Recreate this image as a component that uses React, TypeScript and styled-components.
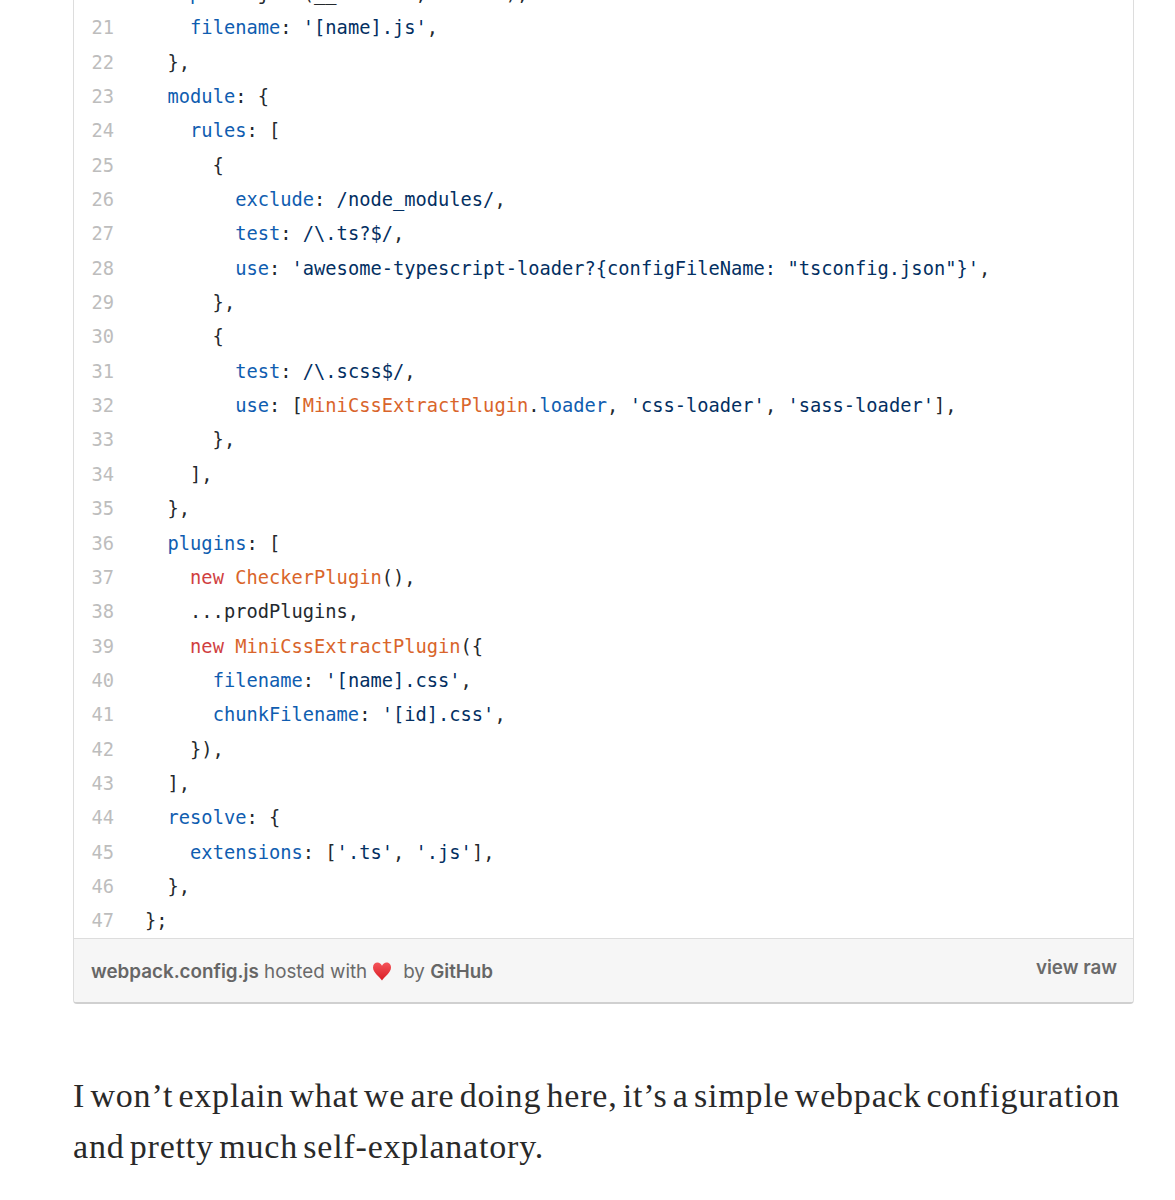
import styled, { createGlobalStyle } from 'styled-components';

const GlobalStyle = createGlobalStyle`
  html, body {
    margin: 0;
    padding: 0;
    background: #fff;
  }
  body {
    height: 1200px;
    overflow: hidden;
  }
`;

const Page = styled.div`
  padding: 0 41px 0 73px;
  overflow: hidden;
  height: 1200px;
`;

const Gist = styled.div`
  margin-top: -24px;
  border: 1px solid #ddd;
  border-bottom: 2px solid #d0d0d0;
  border-radius: 4px;
  overflow: hidden;
`;

const Code = styled.div`
  height: 961px;
  overflow: hidden;
  background: #fff;
`;

const Row = styled.div`
  display: flex;
  height: 34.35px;
  line-height: 34.35px;
  font-family: 'DejaVu Sans Mono', monospace;
  font-size: 18.73px;
  white-space: pre;
  color: #24292e;
`;

const LineNo = styled.span`
  flex: 0 0 71px;
  padding-right: 31px;
  box-sizing: border-box;
  text-align: right;
  color: #bdbdbd;
`;

type TokenKind = 'prop' | 'str' | 'cls' | 'kw' | 'txt';

const tokenColors: Record<TokenKind, string> = {
  prop: '#0f5db0',
  str: '#032f62',
  cls: '#d9652b',
  kw: '#d0403f',
  txt: '#24292e',
};

const Token = styled.span<{ $kind: TokenKind }>`
  color: ${(props) => tokenColors[props.$kind]};
`;

const Footer = styled.div`
  display: flex;
  justify-content: space-between;
  height: 63px;
  padding: 0 16px 0 17px;
  background: #f6f6f6;
  border-top: 1px solid #ddd;
  font-family: Inter, 'Liberation Sans', Arial, sans-serif;
  font-size: 18.8px;
  color: #6a6a6a;
`;

const FooterLeft = styled.div`
  display: flex;
  align-items: center;
  padding-top: 2px;
  white-space: pre;
`;

const Strong = styled.span`
  font-weight: 600;
  color: #666;
`;

const Heart = styled.svg`
  width: 20px;
  height: 20px;
  margin: -2px 11px 0 5px;
`;

const ViewRaw = styled.div`
  font-weight: 600;
  padding-top: 17px;
`;

const Paragraph = styled.p`
  margin: 66px 0 0;
  font-family: 'Liberation Serif', 'Times New Roman', serif;
  font-size: 34px;
  line-height: 51px;
  letter-spacing: 0.8px;
  word-spacing: -4px;
  color: #292929;
`;

type Part = [TokenKind, string];

const lines: [number, Part[]][] = [
  [20, [['txt', '    '], ['prop', 'path'], ['txt', ': '], ['txt', 'join(__dirname, '], ['str', "'dist'"], ['txt', '),']]],
  [21, [['txt', '    '], ['prop', 'filename'], ['txt', ': '], ['str', "'[name].js'"], ['txt', ',']]],
  [22, [['txt', '  },']]],
  [23, [['txt', '  '], ['prop', 'module'], ['txt', ': {']]],
  [24, [['txt', '    '], ['prop', 'rules'], ['txt', ': [']]],
  [25, [['txt', '      {']]],
  [26, [['txt', '        '], ['prop', 'exclude'], ['txt', ': '], ['str', '/node_modules/'], ['txt', ',']]],
  [27, [['txt', '        '], ['prop', 'test'], ['txt', ': '], ['str', '/\\.ts?$/'], ['txt', ',']]],
  [28, [['txt', '        '], ['prop', 'use'], ['txt', ': '], ['str', `'awesome-typescript-loader?{configFileName: "tsconfig.json"}'`], ['txt', ',']]],
  [29, [['txt', '      },']]],
  [30, [['txt', '      {']]],
  [31, [['txt', '        '], ['prop', 'test'], ['txt', ': '], ['str', '/\\.scss$/'], ['txt', ',']]],
  [32, [['txt', '        '], ['prop', 'use'], ['txt', ': ['], ['cls', 'MiniCssExtractPlugin'], ['txt', '.'], ['prop', 'loader'], ['txt', ', '], ['str', "'css-loader'"], ['txt', ', '], ['str', "'sass-loader'"], ['txt', '],']]],
  [33, [['txt', '      },']]],
  [34, [['txt', '    ],']]],
  [35, [['txt', '  },']]],
  [36, [['txt', '  '], ['prop', 'plugins'], ['txt', ': [']]],
  [37, [['txt', '    '], ['kw', 'new'], ['txt', ' '], ['cls', 'CheckerPlugin'], ['txt', '(),']]],
  [38, [['txt', '    ...prodPlugins,']]],
  [39, [['txt', '    '], ['kw', 'new'], ['txt', ' '], ['cls', 'MiniCssExtractPlugin'], ['txt', '({']]],
  [40, [['txt', '      '], ['prop', 'filename'], ['txt', ': '], ['str', "'[name].css'"], ['txt', ',']]],
  [41, [['txt', '      '], ['prop', 'chunkFilename'], ['txt', ': '], ['str', "'[id].css'"], ['txt', ',']]],
  [42, [['txt', '    }),']]],
  [43, [['txt', '  ],']]],
  [44, [['txt', '  '], ['prop', 'resolve'], ['txt', ': {']]],
  [45, [['txt', '    '], ['prop', 'extensions'], ['txt', ': ['], ['str', "'.ts'"], ['txt', ', '], ['str', "'.js'"], ['txt', '],']]],
  [46, [['txt', '  },']]],
  [47, [['txt', '};']]],
];

function App() {
  return (
    <Page>
      <GlobalStyle />
      <Gist>
        <Code>
          {lines.map(([no, parts]) => (
            <Row key={no}>
              <LineNo>{no}</LineNo>
              <span>
                {parts.map(([kind, text], i) => (
                  <Token key={i} $kind={kind}>
                    {text}
                  </Token>
                ))}
              </span>
            </Row>
          ))}
        </Code>
        <Footer>
          <FooterLeft>
            <Strong>webpack.config.js</Strong> hosted with
            <Heart viewBox="0 0 20 20">
              <defs>
                <linearGradient id="heartFill" x1="0" y1="0" x2="0" y2="1">
                  <stop offset="0" stopColor="#f4545a" />
                  <stop offset="1" stopColor="#d91c24" />
                </linearGradient>
              </defs>
              <path
                d="M10 19.500C8 16 1 11.800 1 6.400 1 3.400 3.100 1.500 5.500 1.500 7.500 1.500 9.100 2.800 10 4.800c.9-2 2.500-3.300 4.500-3.300 2.400 0 4.500 1.900 4.500 4.900 0 5.400-7 9.600-9 13.100z"
                fill="url(#heartFill)"
              />
            </Heart>
            by <Strong>GitHub</Strong>
          </FooterLeft>
          <ViewRaw>view raw</ViewRaw>
        </Footer>
      </Gist>
      <Paragraph>
        I won’t explain what we are doing here, it’s a simple webpack configuration
        <br />
        and pretty much self-explanatory.
      </Paragraph>
    </Page>
  );
}

export default App;
